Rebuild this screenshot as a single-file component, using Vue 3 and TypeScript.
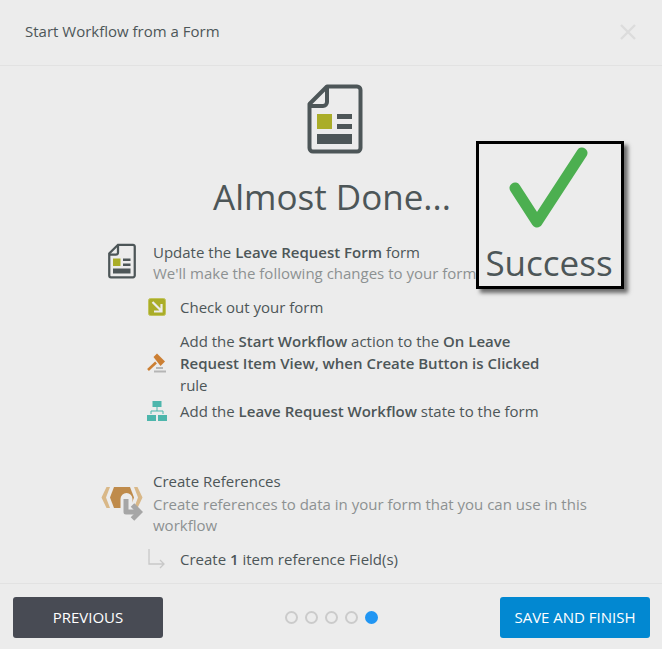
<script setup lang="ts">
interface Dot {
  id: number
  active: boolean
}

const dots: Dot[] = [
  { id: 1, active: false },
  { id: 2, active: false },
  { id: 3, active: false },
  { id: 4, active: false },
  { id: 5, active: true },
]
</script>

<template>
  <div class="dialog">
    <header class="dialog-header">
      <span class="dialog-title">Start Workflow from a Form</span>
      <svg class="close-icon" width="18" height="18" viewBox="0 0 18 18">
        <path d="M2 2 L16 16 M16 2 L2 16" stroke="#dcdcdc" stroke-width="2.4" fill="none" />
      </svg>
    </header>

    <main class="dialog-body">
      <svg class="hero-icon" width="56" height="70" viewBox="0 0 56 70">
        <path d="M20 2.5 H50 a3.5 3.5 0 0 1 3.5 3.5 V64 a3.5 3.5 0 0 1 -3.5 3.5 H6 a3.5 3.5 0 0 1 -3.5 -3.5 V20 Z" fill="none" stroke="#4d5658" stroke-width="4" stroke-linejoin="round" />
        <path d="M20 3 V18 a4 4 0 0 1 -4 4 H3" fill="none" stroke="#4d5658" stroke-width="4" />
        <rect x="10" y="30" width="15" height="15" fill="#aaad28" />
        <rect x="30" y="30" width="15" height="5" fill="#4d5658" />
        <rect x="30" y="40" width="15" height="5" fill="#4d5658" />
        <rect x="10" y="50" width="35" height="10" fill="#4d5658" />
      </svg>
      <h1 class="hero-title">Almost Done...</h1>

      <section class="group group-form">
        <svg class="group-icon" width="28" height="36" viewBox="0 0 56 70">
          <path d="M20 2.5 H50 a3.5 3.5 0 0 1 3.5 3.5 V64 a3.5 3.5 0 0 1 -3.5 3.5 H6 a3.5 3.5 0 0 1 -3.5 -3.5 V20 Z" fill="none" stroke="#4d5658" stroke-width="4.5" />
          <path d="M20 3 V18 a4 4 0 0 1 -4 4 H3" fill="none" stroke="#4d5658" stroke-width="4.5" />
          <rect x="10" y="30" width="15" height="15" fill="#aaad28" />
          <rect x="30" y="30" width="15" height="5" fill="#4d5658" />
          <rect x="30" y="40" width="15" height="5" fill="#4d5658" />
          <rect x="10" y="50" width="35" height="10" fill="#4d5658" />
        </svg>
        <div class="group-text">
          <div class="group-heading">Update the <b>Leave Request Form</b> form</div>
          <div class="group-note">We'll make the following changes to your form:</div>
        </div>
      </section>

      <ul class="steps">
        <li class="step step-checkout">
          <svg class="step-icon" width="20" height="20" viewBox="0 0 20 20">
            <rect x="1.5" y="1.5" width="17" height="17" rx="2" fill="#aaad28" stroke="#c2c45e" />
            <path d="M5.5 5 L14 13.5 M14.5 7 V14.5 H7" stroke="#ececec" stroke-width="2.2" fill="none" />
          </svg>
          <span>Check out your form</span>
        </li>
        <li class="step step-rule">
          <svg class="step-icon" width="20" height="20" viewBox="0 0 20 20">
            <path d="M1 17 L9 9.5" stroke="#cc7f33" stroke-width="2.6" fill="none" />
            <path d="M6.5 4 L10 0.5 L18 8.5 L13.5 13 Z" fill="#cc7f33" />
            <rect x="9" y="14" width="7" height="2" fill="#b5b5b5" />
            <rect x="7" y="17.5" width="12" height="2" fill="#b5b5b5" />
          </svg>
          <span>Add the <b>Start Workflow</b> action to the <b>On Leave Request Item View, when Create Button is Clicked</b> rule</span>
        </li>
        <li class="step step-state">
          <svg class="step-icon" width="20" height="20" viewBox="0 0 20 20">
            <rect x="5.5" y="0" width="9" height="6" fill="#4db6ac" />
            <path d="M10 6 V10 M4 13 V10 H16 V13" stroke="#4db6ac" stroke-width="1" fill="none" />
            <rect x="0" y="14" width="9" height="6" fill="#4db6ac" />
            <rect x="11" y="14" width="9" height="6" fill="#4db6ac" />
          </svg>
          <span>Add the <b>Leave Request Workflow</b> state to the form</span>
        </li>
      </ul>

      <section class="group group-refs">
        <svg class="group-icon refs-icon" width="42" height="38" viewBox="0 0 42 38">
          <path d="M5.5 1 H9 L5 11.5 L9 22 H5.5 L0.5 11.5 Z M36.5 1 H33 L37 11.5 L33 22 H36.5 L41.5 11.5 Z" fill="#d9b888" />
          <path d="M13 1 H29 L33 11.5 L29 22 H13 L9 11.5 Z" fill="#bf8b4b" />
          <path d="M23 24 V13 a2.5 2.5 0 0 1 5 0 V24" fill="none" stroke="#ececec" stroke-width="7" />
          <path d="M25 13 V26 H38" fill="none" stroke="#a6a6a6" stroke-width="5" stroke-linejoin="round" />
          <path d="M31.5 19 L38.5 26 L31.5 33" fill="none" stroke="#a6a6a6" stroke-width="5" />
        </svg>
        <div class="group-text">
          <div class="group-heading">Create References</div>
          <div class="group-note refs-note">Create references to data in your form that you can use in this workflow</div>
        </div>
      </section>

      <ul class="steps">
        <li class="step step-item">
          <svg class="step-icon" width="20" height="22" viewBox="0 0 20 22">
            <path d="M2 1 V16 H17 M13 12 L17 16 L13 20" fill="none" stroke="#c8c8c8" stroke-width="1.3" />
          </svg>
          <span>Create <b>1</b> item reference Field(s)</span>
        </li>
      </ul>
    </main>

    <footer class="dialog-footer">
      <button class="btn btn-prev" type="button">PREVIOUS</button>
      <div class="dots">
        <span v-for="dot in dots" :key="dot.id" class="dot" :class="{ active: dot.active }"></span>
      </div>
      <button class="btn btn-save" type="button">SAVE AND FINISH</button>
    </footer>

    <div class="success-box">
      <svg width="100" height="84" viewBox="0 0 100 84">
        <path d="M15 42 L37 76 L82 7" fill="none" stroke="#4caf50" stroke-width="11" stroke-linecap="round" stroke-linejoin="round" />
      </svg>
      <div class="success-label">Success</div>
    </div>
  </div>
</template>

<style>
html,
body {
  margin: 0;
  background: #ececec;
}
</style>

<style scoped>
.dialog {
  position: relative;
  display: flex;
  flex-direction: column;
  width: 662px;
  height: 649px;
  overflow: hidden;
  background: #ececec;
  color: #4d5658;
  font-family: "Open Sans", "Liberation Sans", sans-serif;
  font-size: 15px;
  line-height: 21px;
}

b {
  font-weight: 600;
}

.dialog-header {
  flex: none;
  box-sizing: border-box;
  height: 66px;
  display: flex;
  align-items: center;
  justify-content: space-between;
  padding: 0 25px 2px;
  border-bottom: 1px solid #e2e2e2;
}

.dialog-body {
  flex: 1;
  min-height: 0;
  display: flex;
  flex-direction: column;
  padding-top: 18px;
}

.hero-icon {
  display: block;
  margin-left: 307px;
}

.hero-title {
  margin: 19px 0 0;
  padding-left: 2px;
  text-align: center;
  font-size: 35px;
  line-height: 48px;
  font-weight: 400;
  color: #4d5658;
}

.group {
  display: flex;
  gap: 17px;
}

.group-form {
  margin: 21px 0 0 108px;
  width: 450px;
}

.group-refs {
  margin: 49px 0 0 101px;
  width: 490px;
}

.group-refs .group-text {
  margin-left: -7px;
}

.group-icon {
  flex: none;
  margin-top: 1px;
}

.refs-icon {
  margin-top: 15px;
}

.group-heading {
  white-space: nowrap;
}

.group-note {
  color: #8c9192;
}

.refs-note {
  margin-top: 2px;
}

.steps {
  list-style: none;
  margin: 0;
  padding: 0 0 0 147px;
}

.step {
  display: flex;
  align-items: center;
  gap: 13px;
  width: 400px;
  line-height: 22px;
}

.step-icon {
  flex: none;
}

.step-checkout {
  margin-top: 12px;
}

.step-rule {
  margin-top: 12px;
}

.step-state {
  margin-top: 4px;
}

.step-item {
  margin-top: 12px;
}

.dialog-footer {
  flex: none;
  box-sizing: border-box;
  height: 66px;
  display: flex;
  align-items: flex-start;
  justify-content: space-between;
  padding: 13px 12px 0 13px;
  border-top: 1px solid #e2e2e2;
}

.btn {
  height: 41px;
  border: none;
  border-radius: 3px;
  color: #ffffff;
  font-family: inherit;
  font-size: 15px;
  padding: 0 0 2px;
}

.btn-prev {
  width: 150px;
  background: #484b54;
}

.btn-save {
  width: 150px;
  background: #0288d1;
}

.dots {
  display: flex;
  gap: 7px;
  margin-top: 14px;
}

.dot {
  box-sizing: border-box;
  width: 13px;
  height: 13px;
  border: 2px solid #cbcbcb;
  border-radius: 50%;
}

.dot.active {
  background: #2196f3;
  border-color: #2196f3;
}

.success-box {
  position: absolute;
  left: 476px;
  top: 141px;
  box-sizing: border-box;
  width: 148px;
  height: 148px;
  border: 3px solid #000000;
  background: #ececec;
  box-shadow: 4px 4px 4px rgba(0, 0, 0, 0.55);
  display: flex;
  flex-direction: column;
  align-items: center;
}

.success-box svg {
  flex: none;
  margin-top: 2px;
}

.success-label {
  font-size: 35px;
  line-height: 44px;
  margin-top: 11px;
  margin-right: 2px;
  color: #4d5658;
}
</style>
